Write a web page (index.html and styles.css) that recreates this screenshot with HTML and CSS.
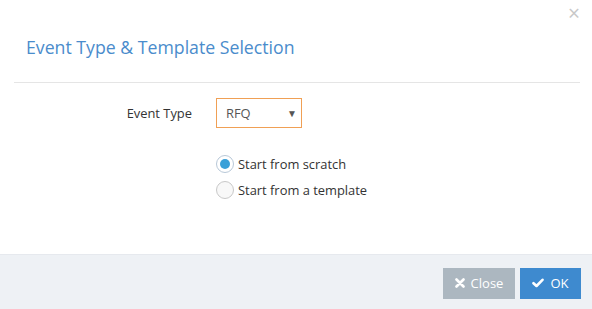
FILE: index.html
```html
<!DOCTYPE html>
<html lang="en">
  <head>
    <meta charset="UTF-8" />
    <title>Event Type & Template Selection</title>
    <link rel="stylesheet" href="styles.css">
  </head>
  <body>
    <div class="modal">
      <div class="modal-header">
        <span class="close-x">&times;</span>
        <h4 class="title">Event Type &amp; Template Selection</h4>
      </div>
      <div class="modal-body">
        <div class="form-row">
          <label class="label">Event Type</label>
          <div class="select">
            <span>RFQ</span>
            <span class="caret">&#9660;</span>
          </div>
        </div>
        <div class="radios">
          <label class="radio"><span class="dot checked"></span>Start from scratch</label>
          <label class="radio"><span class="dot"></span>Start from a template</label>
        </div>
      </div>
      <div class="modal-footer">
        <button class="btn btn-close">
          <svg width="10" height="10" viewBox="0 0 10 10"><path d="M1.5 1.5 L8.5 8.5 M8.5 1.5 L1.5 8.5" stroke="#fff" stroke-width="2.6" stroke-linecap="round"/></svg>
          Close
        </button>
        <button class="btn btn-ok">
          <svg width="12" height="10" viewBox="0 0 12 10"><path d="M1.5 5.2 L4.5 8 L10.5 1.8" fill="none" stroke="#fff" stroke-width="2.6" stroke-linecap="round" stroke-linejoin="round"/></svg>
          OK
        </button>
      </div>
    </div>
  </body>
</html>
```

FILE: styles.css
```css
* {
  margin: 0;
  padding: 0;
  box-sizing: border-box;
}
body {
  font-family: "Open Sans", "Segoe UI", sans-serif;
  font-size: 12.9px;
  color: #333;
  background: #fff;
}
/* modal frame */
.modal {
  width: 592px;
  height: 309px;
  display: flex;
  flex-direction: column;
}
.modal-header {
  position: relative;
  height: 83px;
  margin: 0 12px 0 14px;
  border-bottom: 1px solid #e5e5e5;
  padding: 35px 0 0 12px;
}
.close-x {
  position: absolute;
  top: 3px;
  right: 0;
  font-size: 21px;
  color: #c8c8c8;
  line-height: 20px;
}
.title {
  font-size: 17.7px;
  font-weight: normal;
  color: #4a8ccc;
  line-height: 24px;
}
/* body */
.modal-body {
  flex: 1;
  padding-top: 15px;
}
.form-row {
  display: flex;
  align-items: center;
}
.label {
  width: 192px;
  text-align: right;
}
.select {
  margin-left: 24px;
  width: 86px;
  height: 30px;
  border: 1px solid #f0a055;
  display: flex;
  align-items: center;
  justify-content: space-between;
  padding: 0 4px 0 9px;
  color: #555;
}
.caret {
  font-size: 10px;
  color: #555;
}
.radios {
  margin: 27px 0 0 216px;
  display: flex;
  flex-direction: column;
  gap: 8px;
}
.radio {
  display: flex;
  align-items: center;
  height: 18px;
}
.dot {
  width: 18px;
  height: 18px;
  border-radius: 50%;
  border: 1px solid #c8c8c8;
  background: #f8f8f8;
  margin-right: 4px;
  position: relative;
}
.dot.checked {
  border-color: #b8c8d8;
  background: #fff;
}
.dot.checked::after {
  content: "";
  position: absolute;
  left: 3px;
  top: 3px;
  width: 10px;
  height: 10px;
  border-radius: 50%;
  background: #3aa0d8;
}
/* footer */
.modal-footer {
  height: 55px;
  background: #eef1f5;
  border-top: 1px solid #e6e9ee;
  display: flex;
  justify-content: flex-end;
  align-items: center;
  gap: 5px;
  padding: 2px 11px 0 0;
}
.btn {
  height: 31px;
  border: none;
  color: #fff;
  font-family: "Open Sans", "Segoe UI", sans-serif;
  font-size: 13px;
  display: flex;
  align-items: center;
  justify-content: center;
  gap: 6px;
}
.btn-close {
  width: 72px;
  background: #acb7c0;
}
.btn-ok {
  width: 61px;
  background: #3e8acf;
}
```
